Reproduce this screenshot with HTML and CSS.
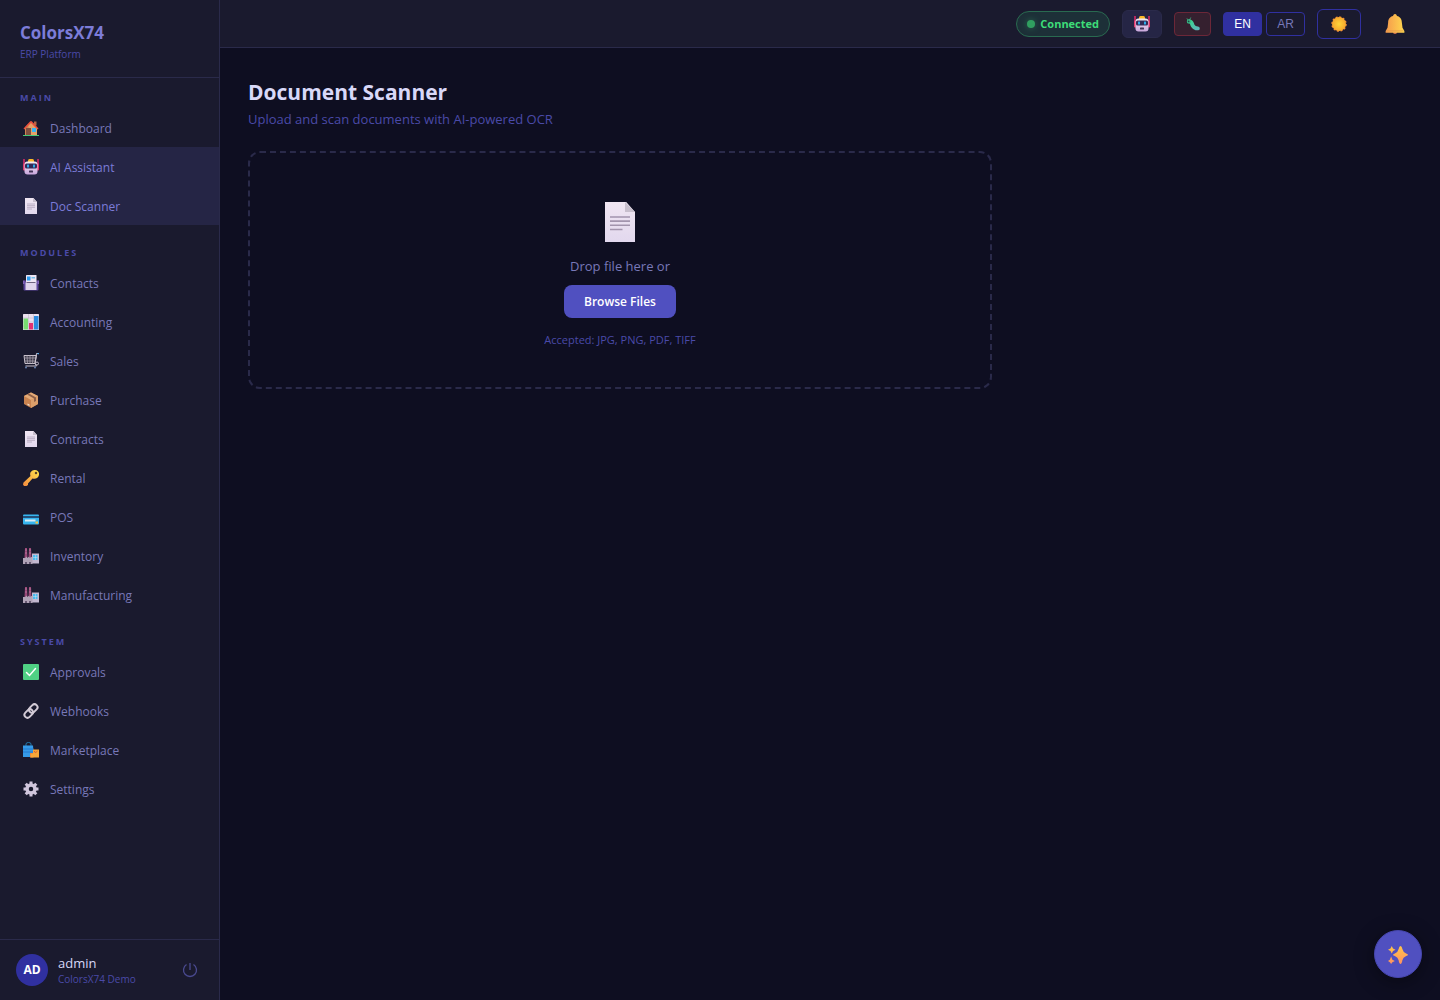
FILE: index.html
```html
<!DOCTYPE html>
<html lang="en">
<head>
    <meta charset="UTF-8">
    <meta name="viewport" content="width=device-width, initial-scale=1.0">
    <title>ColorsX74 - Document Scanner</title>
    <link rel="stylesheet" href="styles.css">
</head>
<body>
    <!-- Icon set -->
    <svg class="sprite" aria-hidden="true">
        <defs>
            <linearGradient id="g-paper" x1="0" y1="0" x2="0" y2="1"><stop offset="0" stop-color="#f0e6f2"/><stop offset="1" stop-color="#e2d8ee"/></linearGradient>
            <linearGradient id="g-gold" x1="0" y1="0" x2="0" y2="1"><stop offset="0" stop-color="#ffc64a"/><stop offset="1" stop-color="#ff9160"/></linearGradient>
            <linearGradient id="g-bell" x1="0" y1="0" x2="1" y2="0"><stop offset="0" stop-color="#f59a4c"/><stop offset="1" stop-color="#ffd84f"/></linearGradient>
            <linearGradient id="g-key" x1="1" y1="0" x2="0" y2="1"><stop offset="0" stop-color="#ffe44c"/><stop offset="1" stop-color="#f48a3e"/></linearGradient>
            <radialGradient id="g-sun"><stop offset="0" stop-color="#ffd43a"/><stop offset="1" stop-color="#f5a62c"/></radialGradient>
            <linearGradient id="g-bot" x1="0" y1="0" x2="0" y2="1"><stop offset="0" stop-color="#f3ecf5"/><stop offset="1" stop-color="#c9a6dc"/></linearGradient>
            <linearGradient id="g-bug" x1="0" y1="0" x2="1" y2="1"><stop offset="0" stop-color="#38d58e"/><stop offset="1" stop-color="#5cb8b8"/></linearGradient>
        </defs>
        <symbol id="i-house" viewBox="0 0 32 32">
            <path d="M22 3h5v8h-5z" fill="#b96542"/>
            <path d="M4 15 16 3l12 12v15H4z" fill="#e5a268"/>
            <path d="M4 15 10 9l4 21H4z" fill="#cf8653"/>
            <path d="M6 16h10v14H6z" fill="#80503f"/>
            <path d="M18 16h8v8h-8z" fill="#38b4f2"/>
            <path d="M1 17 14 3q2-2 4 0l13 14-2 2L16 6 3 19z" fill="#e94f3d"/>
            <path d="M0 30h32v2H0z" fill="#45c978"/>
        </symbol>
        <symbol id="i-robot" viewBox="0 0 32 32">
            <path d="M2 0v22M30 0v22" stroke="#dd2a68" stroke-width="3"/>
            <rect x="0" y="9" width="6" height="14" rx="2" fill="#e2396d"/>
            <rect x="26" y="9" width="6" height="14" rx="2" fill="#e2396d"/>
            <path d="M10 3q0-3 3-3h6q3 0 3 3v4H10z" fill="#fbb928"/>
            <rect x="3" y="5" width="26" height="26" rx="6" fill="url(#g-bot)"/>
            <rect x="4" y="9" width="24" height="10" rx="3" fill="#332a56"/>
            <rect x="8" y="11" width="4" height="6" rx="1" fill="#2eaae8"/>
            <rect x="20" y="11" width="4" height="6" rx="1" fill="#2eaae8"/>
            <rect x="12" y="23" width="8" height="4" rx="1" fill="#433357"/>
        </symbol>
        <symbol id="i-doc" viewBox="0 0 32 32">
            <path d="M4 0h17l7 8v24H4z" fill="url(#g-paper)"/>
            <path d="M20 0v8h8z" fill="#c8bfcd"/>
            <path d="M8 12h16M8 15.300h16M8 18.600h16M8 22h10" stroke="#a294ad" stroke-width="1.300"/>
        </symbol>
        <symbol id="i-contacts" viewBox="0 0 32 32">
            <rect x="1" y="11" width="30" height="20" rx="2" fill="#5b459a"/>
            <rect x="6" y="0" width="21" height="16" rx="1" fill="#eee5f3"/>
            <path d="M8 3h7v8H8z" fill="#2d9cef"/>
            <path d="M17 4h7v3h-7z" fill="#76bfe9"/>
            <path d="M5 15h22v15H5z" fill="#dfd4eb"/>
            <path d="M7 15h18" stroke="#6e637f" stroke-width="2"/>
            <path d="M0 11h3v7H0zM29 11h3v7h-3z" fill="#8163b8"/>
        </symbol>
        <symbol id="i-chart" viewBox="0 0 32 32">
            <rect width="32" height="32" rx="1" fill="#eae0ee"/>
            <path d="M0 8h32M0 16h32M0 24h32M11 0v32M21 0v32" stroke="#bdb3c5"/>
            <path d="M1 9h9v22H1z" fill="#78dc70"/>
            <path d="M12 18h8v13h-8z" fill="#e23172"/>
            <path d="M22 4h9v27h-9z" fill="#298be0"/>
        </symbol>
        <symbol id="i-cart" viewBox="0 0 32 32">
            <path d="M2 5h25l-3 16H4z" fill="#3b3947" stroke="#c9c1cc" stroke-width="2"/>
            <path d="M8 5l1 16M14 5v16M20 5l-1 16M3 10h23M3 16h22" stroke="#aaa2af" stroke-width="1.500"/>
            <path d="M31 1h-4l-3 20 3 5H5" fill="none" stroke="#ccc4cf" stroke-width="2"/>
            <path d="M29 1h3" stroke="#4aa9e9" stroke-width="3"/>
            <circle cx="28" cy="21" r="3" fill="none" stroke="#bbb2c3" stroke-width="2"/>
            <circle cx="6" cy="29" r="2" fill="#6681af"/><circle cx="24" cy="29" r="2" fill="#6681af"/>
        </symbol>
        <symbol id="i-box" viewBox="0 0 32 32">
            <path d="m16 1 14 7v16l-14 8-14-8V8z" fill="#c9834f"/>
            <path d="m16 1 14 7-14 8L2 8z" fill="#e4ab78"/>
            <path d="m16 16 14-8v16l-14 8z" fill="#dc9f6a"/>
            <path d="m8 5 14 8v7l4-2v-7L12 3z" fill="#8e6048"/>
            <path d="m9 23 4 2v3l-4-2z" fill="#f2dbcb"/>
        </symbol>
        <symbol id="i-key" viewBox="0 0 32 32">
            <path d="M15 12C12 4 19 0 24 0c6 0 9 5 8 10-1 6-7 9-13 7L10 27v3l-3 2H2l-2-3 1-4z" fill="url(#g-key)"/>
            <circle cx="26" cy="6" r="2.500" fill="#5e4426"/>
        </symbol>
        <symbol id="i-card" viewBox="0 0 32 32">
            <rect y="11" width="32" height="20" rx="2" fill="#37b5ef"/>
            <path d="M0 14h32v4H0z" fill="#234f78"/>
            <path d="M4 21h21v4H4z" fill="#dcecf4"/>
            <path d="M25 25h5v4h-5z" fill="#f5c23f"/>
        </symbol>
        <symbol id="i-factory" viewBox="0 0 32 32">
            <path d="M4 0h4l1 20H3zM12 0h4l1 20h-6z" fill="#9a4878"/>
            <path d="M4 4h4M12 4h4M4 10h4M12 10h4" stroke="#c9a5bb" stroke-width="1"/>
            <path d="M18 11h14v20H18z" fill="#c3b8d0"/>
            <path d="M0 20h4l4-3v3l5-3v3l6-3v15H0z" fill="#b1a4b8"/>
            <path d="M20 14h9v10h-9z" fill="#4bbaf0"/>
            <path d="M20 19h9M25 14v10" stroke="#c8e5f1"/>
            <path d="M4 28h4v4H4zM12 28h4v4h-4z" fill="#655771"/>
        </symbol>
        <symbol id="i-check" viewBox="0 0 32 32">
            <rect width="32" height="32" rx="2" fill="#4fd184"/>
            <path d="m7 17 6 6L25 9" fill="none" stroke="#fff" stroke-width="3" stroke-linecap="round"/>
        </symbol>
        <symbol id="i-link" viewBox="0 0 32 32">
            <g fill="none" stroke="#d3cbd6" stroke-width="4">
                <rect x="11" y="5" width="19" height="12" rx="6" transform="rotate(-45 20.500 11)"/>
                <rect x="2" y="15" width="19" height="12" rx="6" transform="rotate(-45 11.500 21)"/>
            </g>
        </symbol>
        <symbol id="i-bags" viewBox="0 0 32 32">
            <path d="M6 9V4q0-3 5-3t5 3v5" fill="none" stroke="#2479a8" stroke-width="2"/>
            <path d="M0 7h20l2 23H0z" fill="#359be9"/>
            <path d="M0 14h21M0 20h21" stroke="#2579ce" stroke-width="2"/>
            <path d="M14 22h7v9h-7z" fill="#e47b43"/>
            <path d="M20 15h12v16H15v-8h5z" fill="#f8a738"/>
            <path d="M23 18q0 6 6 0" fill="none" stroke="#d35f38" stroke-width="2"/>
        </symbol>
        <symbol id="i-gear" viewBox="0 0 32 32">
            <g fill="none" stroke="#d0c6dc">
                <circle cx="16" cy="16" r="8" stroke-width="7"/>
                <path d="M16 1v6M16 25v6M1 16h6M25 16h6M5.400 5.400 9 9M23 23l3.600 3.600M5.400 26.600 9 23M23 9l3.600-3.600" stroke-width="6"/>
            </g>
        </symbol>
        <symbol id="i-power" viewBox="0 0 16 16">
            <path d="M4.500 2.500a6.500 6.500 0 1 0 7 0M8 1v7" fill="none" stroke="currentColor" stroke-width="1.300"/>
        </symbol>
        <symbol id="i-bug" viewBox="0 0 32 32">
            <path d="M5 8 2 3M8 7l3-6" stroke="#3d9d7a" stroke-width="2"/>
            <path d="M7 10c7 0 6 5 8 9s5 7 12 7" fill="none" stroke="url(#g-bug)" stroke-width="9" stroke-linecap="round"/>
            <circle cx="7" cy="10" r="5" fill="#36bd86"/>
            <circle cx="6" cy="10" r="2" fill="#263e44"/>
        </symbol>
        <symbol id="i-sun" viewBox="0 0 32 32">
            <circle cx="16" cy="16" r="14" fill="none" stroke="#f2873c" stroke-width="3" stroke-dasharray="4 3.330"/>
            <circle cx="16" cy="16" r="14" fill="url(#g-sun)"/>
        </symbol>
        <symbol id="i-bell" viewBox="0 0 32 32">
            <circle cx="16" cy="29" r="3" fill="#ca704f"/>
            <path d="M16 0c2 0 3 2 3 3 6 1 8 6 8 11l1 8 3 5v3H1v-3l3-5 1-8c0-5 2-10 8-11 0-1 1-3 3-3z" fill="url(#g-bell)"/>
            <path d="M2 27h28" stroke="#d9914c"/>
        </symbol>
        <symbol id="i-sparkles" viewBox="0 0 32 32">
            <path d="M20 3q2 0 3 5 1 5 6 7 3 1 3 2t-3 2q-5 2-6 7-1 6-3 6t-3-6q-1-5-6-7-3-1-3-2t3-2q5-2 6-7 1-5 3-5zM6 3l2 4 4 2-4 2-2 4-2-4-4-2 4-2zM5 20l2 5 4 2-4 2-2 3-2-3-3-2 3-2z" fill="url(#g-gold)"/>
        </symbol>
    </svg>

    <div class="layout">
        <aside class="sidebar">
            <div class="brand">
                <div class="brand-name">ColorsX74</div>
                <div class="brand-sub">ERP Platform</div>
            </div>

            <nav class="nav">
                <div class="nav-section">
                    <div class="nav-label">MAIN</div>
                    <a href="#" class="nav-item"><svg class="icon"><use href="#i-house"/></svg>Dashboard</a>
                    <a href="#" class="nav-item active"><svg class="icon"><use href="#i-robot"/></svg>AI Assistant</a>
                    <a href="#" class="nav-item active"><svg class="icon"><use href="#i-doc"/></svg>Doc Scanner</a>
                </div>
                <div class="nav-section">
                    <div class="nav-label">MODULES</div>
                    <a href="#" class="nav-item"><svg class="icon"><use href="#i-contacts"/></svg>Contacts</a>
                    <a href="#" class="nav-item"><svg class="icon"><use href="#i-chart"/></svg>Accounting</a>
                    <a href="#" class="nav-item"><svg class="icon"><use href="#i-cart"/></svg>Sales</a>
                    <a href="#" class="nav-item"><svg class="icon"><use href="#i-box"/></svg>Purchase</a>
                    <a href="#" class="nav-item"><svg class="icon"><use href="#i-doc"/></svg>Contracts</a>
                    <a href="#" class="nav-item"><svg class="icon"><use href="#i-key"/></svg>Rental</a>
                    <a href="#" class="nav-item"><svg class="icon"><use href="#i-card"/></svg>POS</a>
                    <a href="#" class="nav-item"><svg class="icon"><use href="#i-factory"/></svg>Inventory</a>
                    <a href="#" class="nav-item"><svg class="icon"><use href="#i-factory"/></svg>Manufacturing</a>
                </div>
                <div class="nav-section">
                    <div class="nav-label">SYSTEM</div>
                    <a href="#" class="nav-item"><svg class="icon"><use href="#i-check"/></svg>Approvals</a>
                    <a href="#" class="nav-item"><svg class="icon"><use href="#i-link"/></svg>Webhooks</a>
                    <a href="#" class="nav-item"><svg class="icon"><use href="#i-bags"/></svg>Marketplace</a>
                    <a href="#" class="nav-item"><svg class="icon"><use href="#i-gear"/></svg>Settings</a>
                </div>
            </nav>

            <div class="user">
                <div class="avatar">AD</div>
                <div class="user-info">
                    <div class="user-name">admin</div>
                    <div class="user-company">ColorsX74 Demo</div>
                </div>
                <button type="button" class="logout" aria-label="Log out"><svg class="icon"><use href="#i-power"/></svg></button>
            </div>
        </aside>

        <div class="content">
            <header class="topbar">
                <div class="status"><span class="status-dot"></span>Connected</div>
                <button type="button" class="btn-ai" aria-label="AI Assistant"><svg class="icon"><use href="#i-robot"/></svg></button>
                <button type="button" class="btn-debug" aria-label="Debug"><svg class="icon icon-sm"><use href="#i-bug"/></svg></button>
                <div class="lang">
                    <button type="button" class="lang-btn selected">EN</button>
                    <button type="button" class="lang-btn">AR</button>
                </div>
                <button type="button" class="btn-theme" aria-label="Theme"><svg class="icon"><use href="#i-sun"/></svg></button>
                <button type="button" class="btn-bell" aria-label="Notifications"><svg class="icon icon-lg"><use href="#i-bell"/></svg></button>
            </header>

            <main class="page">
                <h1>Document Scanner</h1>
                <p class="subtitle">Upload and scan documents with AI-powered OCR</p>

                <div class="drop-zone">
                    <svg class="drop-icon"><use href="#i-doc"/></svg>
                    <p class="drop-text">Drop file here or</p>
                    <button type="button" class="browse">Browse Files</button>
                    <p class="drop-hint">Accepted: JPG, PNG, PDF, TIFF</p>
                </div>
            </main>
        </div>
    </div>

    <button type="button" class="fab" aria-label="Ask AI"><svg class="icon icon-lg"><use href="#i-sparkles"/></svg></button>
</body>
</html>
```
FILE: styles.css
```css
* {
    box-sizing: border-box;
    margin: 0;
    padding: 0;
}

body {
    background: #0e0e21;
    color: #d8d8f8;
    font-family: 'Segoe UI', 'Open Sans', sans-serif;
    font-size: 13px;
    line-height: 20px;
}

button {
    font-family: inherit;
    cursor: pointer;
}

.sprite {
    position: absolute;
    width: 0;
    height: 0;
}

.icon {
    display: block;
    width: 16px;
    height: 16px;
}

.icon-sm {
    width: 14px;
    height: 14px;
}

.icon-lg {
    width: 20px;
    height: 20px;
}

.layout {
    display: flex;
    min-height: 100vh;
}

/* Sidebar */
.sidebar {
    display: flex;
    flex-direction: column;
    flex: 0 0 220px;
    background: #1a1a2e;
    border-right: 1px solid #2a2a4a;
}

.brand {
    padding: 20px 20px 15px;
    border-bottom: 1px solid #2a2a4a;
}

.brand-name {
    font-size: 17px;
    font-weight: 700;
    line-height: 26px;
    color: #7c7cd8;
}

.brand-sub {
    font-size: 10px;
    line-height: 16px;
    color: #4a4aa8;
}

.nav {
    flex: 1;
}

.nav-section {
    padding-bottom: 8px;
}

.nav-label {
    padding: 14px 20px 4px;
    font-size: 9px;
    font-weight: 700;
    line-height: 12px;
    letter-spacing: 2px;
    color: #4a4aa8;
}

.nav-item {
    display: flex;
    align-items: center;
    gap: 11px;
    height: 39px;
    padding: 2px 23px 0;
    font-size: 12px;
    color: #7878b8;
    text-decoration: none;
}

.nav-item .icon {
    margin-bottom: 2px;
}

.nav-item.active {
    background: #252545;
    color: #7c7cd8;
}

.user {
    display: flex;
    align-items: center;
    gap: 10px;
    padding: 13px 16px;
    border-top: 1px solid #2a2a4a;
}

.avatar {
    width: 32px;
    height: 32px;
    border-radius: 50%;
    background: #3030a0;
    color: #fff;
    font-size: 12px;
    font-weight: 700;
    line-height: 32px;
    text-align: center;
}

.user-info {
    flex: 1;
    padding-top: 2px;
    line-height: 16px;
}

.user-name {
    font-size: 13px;
}

.user-company {
    font-size: 10px;
    color: #4a4aa8;
}

.logout {
    padding: 5px;
    border: 0;
    background: none;
    color: #4a4a90;
}

/* Top bar */
.content {
    flex: 1;
    min-width: 0;
}

.topbar {
    display: flex;
    align-items: center;
    justify-content: flex-end;
    gap: 12px;
    height: 48px;
    padding: 0 24px;
    background: #1a1a2e;
    border-bottom: 1px solid #2a2a4a;
}

.topbar button {
    display: flex;
    align-items: center;
    justify-content: center;
}

.status {
    display: flex;
    align-items: center;
    gap: 5px;
    height: 26px;
    padding: 0 10px;
    border: 1px solid #296a50;
    border-radius: 13px;
    background: #1d3038;
    color: #3ddc78;
    font-size: 11px;
    font-weight: 700;
}

.status-dot {
    width: 8px;
    height: 8px;
    border-radius: 50%;
    background: #30a060;
    box-shadow: 0 0 6px #276b4d;
}

.btn-ai {
    width: 40px;
    height: 28px;
    border: 1px solid #2a2a4a;
    border-radius: 6px;
    background: #252545;
}

.btn-debug {
    width: 37px;
    height: 24px;
    border: 1px solid #6c2738;
    border-radius: 4px;
    background: #35202f;
}

.lang {
    display: flex;
    gap: 4px;
}

.lang-btn {
    width: 39px;
    height: 24px;
    border: 1px solid #3030a0;
    border-radius: 4px;
    background: none;
    color: #7878b8;
    font-family: 'Liberation Sans', sans-serif;
    font-size: 12px;
}

.lang-btn.selected {
    background: #3030a0;
    color: #fff;
}

.btn-theme {
    width: 44px;
    height: 30px;
    border: 1px solid #3030a0;
    border-radius: 6px;
    background: none;
}

.btn-bell {
    width: 43px;
    height: 30px;
    border: 0;
    background: none;
}

/* Page */
.page {
    max-width: 800px;
    padding: 28px;
}

h1 {
    margin-bottom: 1px;
    font-size: 21px;
    font-weight: 700;
    line-height: 32px;
}

.subtitle {
    margin-bottom: 22px;
    font-size: 13px;
    color: #4a4aa8;
}

.drop-zone {
    display: flex;
    flex-direction: column;
    align-items: center;
    padding: 49px 40px 39px;
    border: 2px dashed #2a2a4a;
    border-radius: 12px;
}

.drop-icon {
    width: 40px;
    height: 40px;
    margin-bottom: 14px;
}

.drop-text {
    margin-bottom: 9px;
    font-size: 13px;
    color: #7878b8;
}

.browse {
    height: 33px;
    margin-bottom: 14px;
    padding: 0 20px;
    border: 0;
    border-radius: 8px;
    background: #5050c0;
    color: #fff;
    font-size: 12px;
    font-weight: 600;
}

.drop-hint {
    font-size: 11px;
    line-height: 16px;
    color: #4a4aa8;
}

.fab {
    position: fixed;
    right: 18px;
    bottom: 22px;
    display: flex;
    align-items: center;
    justify-content: center;
    width: 48px;
    height: 48px;
    border: 1px solid #4646ad;
    border-radius: 50%;
    background: #5050c0;
    box-shadow: 0 4px 20px rgba(0, 0, 0, 0.4);
}
```
